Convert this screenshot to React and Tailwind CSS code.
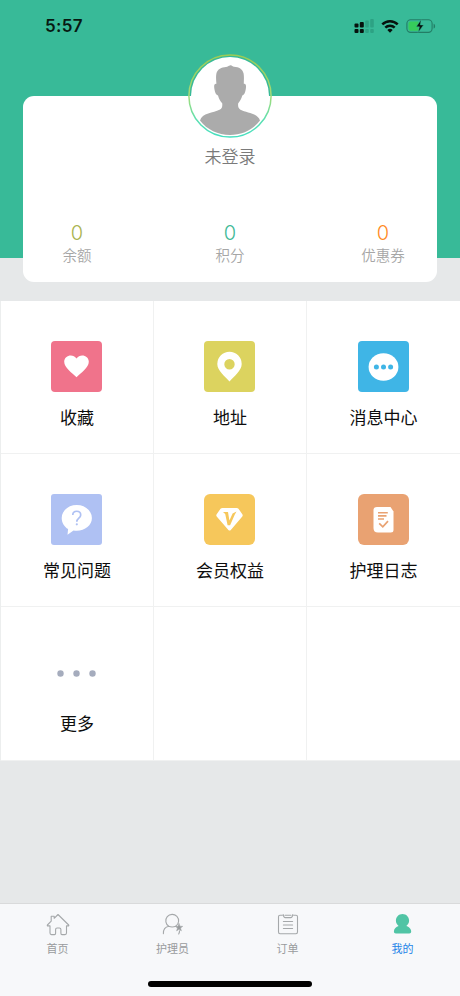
import React from "react";

function StatusBar() {
  return (
    <div className="flex h-[52px] items-center justify-between pl-[45px] pr-[24px]">
      <span className="font-['Inter','Liberation_Sans',sans-serif] text-[17px] font-semibold leading-6 tracking-[0.3px] text-[#071912]">5:57</span>
      <svg width="82" height="16" viewBox="354 17 82 16">
        <g fill="#06120d">
          <rect x="354.5" y="22.5" width="4" height="4" rx="1" />
          <rect x="359.8" y="21" width="4" height="5.5" rx="1" />
          <rect x="354.5" y="28" width="4" height="4" rx="1" />
          <rect x="359.8" y="28" width="4" height="4" rx="1" />
        </g>
        <g fill="#2a9b7e" opacity="0.75">
          <rect x="365.2" y="19.5" width="3.6" height="7" rx="1" />
          <rect x="370.2" y="18" width="3.6" height="8.5" rx="1" />
          <rect x="365.2" y="28" width="3.6" height="4" rx="1" />
          <rect x="370.2" y="28" width="3.6" height="4" rx="1" />
        </g>
        <g fill="none" stroke="#06120d" strokeWidth="2.5">
          <path d="M382.3 23.4a11 11 0 0 1 15.4 0" />
          <path d="M385.3 26.7a6.8 6.8 0 0 1 9.4 0" />
        </g>
        <path d="M387.3 29a4 4 0 0 1 5.4 0L390 31.8z" fill="#06120d" />
        <rect x="406.9" y="18.8" width="25.2" height="12.6" rx="3.8" fill="none" stroke="#237d65" strokeWidth="1.1" />
        <path d="M433.6 22.8c2 .6 2 4.2 0 4.8z" fill="#237d65" />
        <path d="M410.5 20.5h8v9.2h-8q-2 0-2-2v-5.2q0-2 2-2z" fill="#36cc5b" />
        <path d="M421.2 18.6l-5 7.2h3.2l-1.2 5.6 5.4-7.5h-3.3z" fill="#06120d" stroke="#38ba98" strokeWidth="0.5" />
      </svg>
    </div>
  );
}

function Avatar() {
  return (
    <svg width="84" height="84" viewBox="0 0 84 84" className="absolute -top-[42px] left-1/2 -translate-x-1/2">
      <defs>
        <linearGradient id="ring" x1="0" y1="0" x2="0" y2="1">
          <stop offset="0" stopColor="#9ccc54" />
          <stop offset="0.5" stopColor="#a5dc78" />
          <stop offset="0.8" stopColor="#5adfb2" />
          <stop offset="1" stopColor="#45dfc0" />
        </linearGradient>
      </defs>
      <path d="M1 42a41 41 0 0 1 82 0z" fill="#38ba98" />
      <circle cx="42" cy="42" r="39" fill="#fff" />
      <circle cx="42" cy="42" r="41.1" fill="none" stroke="url(#ring)" strokeWidth="1.5" />
      <path
        d="M42 11.400C43.500 10.600 44.400 12.300 46 12.800C51 13 54.500 15 55.600 19.500C56.200 23 55.800 26.500 55.800 29.800C58 29.500 58.300 31.500 57.800 35C57.200 38.500 56.200 41 54.300 41.500C53.300 45 51.800 47.300 50.200 49.300C49.800 52.500 50.300 54.500 52.500 55.800C58.500 59 70 59 72 66.500C65 75.700 54 80.900 42 80.900S19 75.700 12 66.500C14 59 25.500 59 31.500 55.800C34 54.500 34.600 52.500 34.200 49.300C32.400 47.300 31 45 30 41.500C28 41 27 38.500 26.400 35C25.800 31.500 26.200 29.500 28.400 29.800C28.200 26.500 27.700 23 28.400 19.500C29.500 15 33.500 13.200 38 12.900C39.800 12.800 40.500 11.500 42 11.400Z"
        fill="#ababab"
      />
    </svg>
  );
}

function Stat({ label, color }) {
  return (
    <div className="flex w-[108px] flex-col items-center">
      <span className={`font-['Inter','Liberation_Sans',sans-serif] text-[20px] font-light leading-6 ${color}`}>0</span>
      <span className="text-[14.5px] font-[350] leading-5 text-[#a6a6a6]">{label}</span>
    </div>
  );
}

function Tile({ color, radius = "rounded-[4px]", height = "h-[153px]", edge = "border-r", label, children }) {
  return (
    <div className={`flex ${height} ${edge} flex-col items-center border-b border-[#f0f1f1] bg-white pt-10`}>
      {children && (
        <>
          <div className={`mr-px h-[51px] w-[51px] ${color} ${radius}`}>
            <svg width="51" height="51" viewBox="0 0 51 51">{children}</svg>
          </div>
          <span className="mt-[13px] text-[17px] leading-6 text-[#0d0d0d]">{label}</span>
        </>
      )}
    </div>
  );
}

function Tab({ label, active, children }) {
  return (
    <div className="flex flex-1 flex-col items-center pt-[9px]">
      <svg width="24" height="24" viewBox="0 0 24 24" fill="none" stroke="#a5a8aa" strokeWidth="1.1" strokeLinecap="round" strokeLinejoin="round">
        {children}
      </svg>
      <span className={`mt-[3px] text-[11px] leading-4 ${active ? "text-[#2384e8]" : "text-[#999b9d]"}`}>{label}</span>
    </div>
  );
}

export default function App() {
  return (
    <div className="flex h-[996px] w-[460px] flex-col overflow-hidden bg-[#e6e8e9] font-['Noto_Sans_CJK_SC',sans-serif]">
      <header className="h-[258px] shrink-0 bg-[#38ba98]">
        <StatusBar />
        <section className="relative mx-[23px] mt-[44px] flex h-[186px] flex-col rounded-[11px] bg-white">
          <Avatar />
          <div className="mt-[48px] text-center text-[17px] font-[350] leading-6 text-[#7a7a7a]">未登录</div>
          <div className="mt-[53px] flex justify-between">
            <Stat label="余额" color="text-[#aab34f]" />
            <Stat label="积分" color="text-[#3db996]" />
            <Stat label="优惠券" color="text-[#ff8b1f]" />
          </div>
        </section>
      </header>

      <main className="mt-[43px] grid w-[460px] shrink-0 grid-cols-[153px_153px_153px] border-l border-[#eceeee] bg-white">
        <Tile label="收藏" color="bg-[#f0738b]">
          <path d="M25.500 36.200C21 31.700 13.200 26.800 13.200 20.800c0-6.700 8.800-8.700 12.300-3.300 3.500-5.400 12.300-3.400 12.300 3.300 0 6-7.800 10.900-12.300 15.400z" fill="#fff" />
        </Tile>
        <Tile label="地址" color="bg-[#dcd35f]">
          <path fillRule="evenodd" d="M25.500 40.600C21 35.300 13.300 29.500 13.300 23a12.200 12.200 0 0 1 24.400 0c0 6.500-7.700 12.300-12.200 17.600zM25.500 18.100a5.200 5.200 0 1 0 0 10.400 5.200 5.200 0 0 0 0-10.400z" fill="#fff" />
        </Tile>
        <Tile label="消息中心" color="bg-[#3fb5e6]" edge="border-r-0">
          <ellipse cx="25.500" cy="26" rx="14.900" ry="13.700" fill="#fff" />
          <g fill="#3fb5e6">
            <circle cx="18.400" cy="26" r="2.500" />
            <circle cx="25.500" cy="26" r="2.500" />
            <circle cx="32.600" cy="26" r="2.500" />
          </g>
        </Tile>
        <Tile label="常见问题" color="bg-[#afc1f3]" radius="rounded-[3px]">
          <path d="M25.700 11C17.300 11 10.700 16.800 10.700 24c0 5 2.600 8.700 6.400 11.100l-.6 5.600 6-4.300c9.900 1.500 18.400-4.200 18.400-12.400C40.900 16.800 34.100 11 25.700 11z" fill="#fff" />
          <path d="M21.800 20.900c0-4.900 7.900-4.900 7.900 0 0 3.200-3.900 3.300-3.900 6.800" fill="none" stroke="#afc1f3" strokeWidth="1.700" />
          <circle cx="25.800" cy="30.300" r="1.100" fill="#afc1f3" />
        </Tile>
        <Tile label="会员权益" color="bg-[#f6c75b]" radius="rounded-[6px]">
          <path d="M18.500 14h14.200q1.100 0 1.800.8l4 5.700q.6 1-.2 1.900L26.800 36q-1.200 1.200-2.400 0L12.700 22.400q-.8-.9-.2-1.900l4-5.700q.8-.8 2-.8z" fill="#fff" />
          <path d="M19 18h5l1.400 8.600 3.200-7.200 3.900-1.900-1.800 3.200-4.600 10.500h-2.500L21.200 20z" fill="#f6c75b" />
        </Tile>
        <Tile label="护理日志" color="bg-[#e9a272]" radius="rounded-[6px]" edge="border-r-0">
          <path d="M19 13h13.500l3 4.500V36q0 2.500-2.700 2.500H20Q15.500 38.500 15.500 34V16q0-3 3.500-3z" fill="#fff" />
          <g fill="none" stroke="#e9a272" strokeWidth="1.600">
            <path d="M20 18.700h9.800M20 21.900h8.500M20 25h6" />
            <path d="M21.200 29.300l3.600 3.500 5.200-5.700" strokeWidth="1.700" />
          </g>
        </Tile>
        <Tile label="更多" color="bg-white" height="h-[154px]">
          <g fill="#a5acbd">
            <circle cx="9.500" cy="26.500" r="3.200" />
            <circle cx="25.500" cy="26.500" r="3.200" />
            <circle cx="41.500" cy="26.500" r="3.200" />
          </g>
        </Tile>
        <Tile height="h-[154px]" />
        <Tile height="h-[154px]" edge="border-r-0" />
      </main>

      <footer className="mt-auto flex h-[93px] shrink-0 flex-col border-t border-[#d9dadb] bg-[#f7f8fa]">
        <nav className="flex">
          <Tab label="首页">
            <path d="M1.400 12L5.200 8.200V3.300h3v2L12 1.500 22.700 12c.3.500 0 .9-.5.900h-1.700v7.200q0 1.500-1.500 1.500h-3q-1.100 0-1.100-1.300v-3.800q0-1.500-1.500-1.500h-2.300q-1.500 0-1.500 1.500v3.800q0 1.300-1.100 1.300h-3q-1.500 0-1.500-1.500v-7.200H1.800q-.7 0-.4-.9z" />
          </Tab>
          <Tab label="护理员">
            <path d="M7.800 13.200a6.400 6.400 0 1 1 7.100-.2M7.800 13.200c-3 .6-5.600 3.200-5.400 7.400M7.800 13.200c2.300 1.100 4.500 1 7.100 0M18.500 17.800q.2 1.500-.8 3.200" />
            <path d="M18 10.500l1 2.700 2.800.1-2.200 1.800.8 2.800-2.400-1.600-2.400 1.600.8-2.800-2.200-1.800 2.800-.1z" fill="#999c9e" strokeWidth="0.500" />
          </Tab>
          <Tab label="订单">
            <path d="M6.200 2.200H4q-1.500 0-1.500 1.500V19q0 1.700 1.500 1.700h16q1.500 0 1.500-1.700V3.700q0-1.500-1.500-1.500h-2.200M7.200 1.600q.5 3 2 3h5.600q1.500 0 2-3M9 2.200h6M7.400 8.500h9.200M7.400 12h9.200M7.400 15.500h9.200" />
          </Tab>
          <Tab label="我的" active>
            <path d="M11.500 1c-3.800 0-6.600 2.900-6.600 6.600 0 2.300 1 4.100 2.700 5.500C5.300 13.800 2.900 15.900 2.900 18.500c0 1.300.7 2 2 2h13.300c1.300 0 2-.7 2-2 0-2.600-2.500-4.700-4.900-5.400 1.800-1.400 2.800-3.200 2.800-5.500C18.100 3.900 15.300 1 11.500 1z" fill="#50c4a5" stroke="none" />
          </Tab>
        </nav>
        <div className="mb-[9px] mt-auto h-[6px] w-[164px] self-center rounded-full bg-black" />
      </footer>
    </div>
  );
}
